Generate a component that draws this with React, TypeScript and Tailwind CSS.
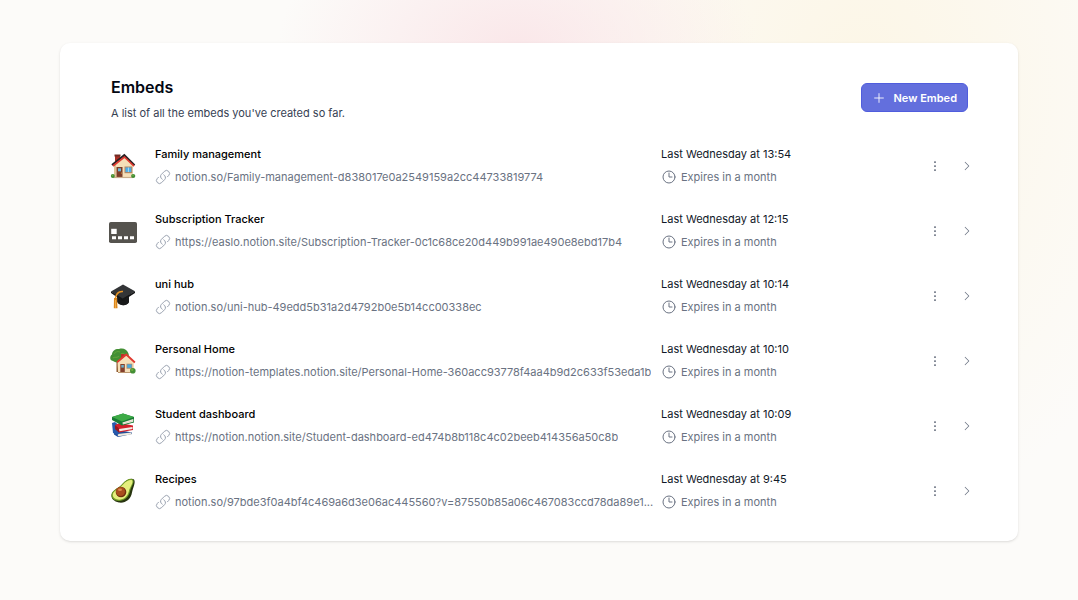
import { ReactNode } from 'react';
import {
  HiChevronRight,
  HiOutlineClock,
  HiOutlineEllipsisVertical,
  HiOutlineLink,
  HiOutlinePlus,
} from 'react-icons/hi2';

interface Embed {
  title: string;
  url: string;
  updated: string;
  expires: string;
  icon: ReactNode;
}

const HouseIcon = () => (
  <svg viewBox="0 0 28 28" className="size-7" aria-hidden="true">
    <path d="M6 3h5v9H6z" fill="#a92f24" />
    <path d="M5.5 2.5h6v2h-6z" fill="#6f2d24" />
    <path d="M5 12 15.5 4 24 13v12H5z" fill="#f5dfb8" />
    <path d="M5 12v13h2V11z" fill="#dec397" />
    <path d="M3 13 15.3 3.2 25.5 13.2" fill="none" stroke="#272023" strokeWidth="2" />
    <path d="M4 14 15.4 5 25 14.2" fill="none" stroke="#e03930" strokeWidth="1.6" />
    <path d="M7.5 15h6v10h-6z" fill="#7d3c28" />
    <path d="M9 16.3h3v3H9z" fill="#6ab8d8" />
    <circle cx="12.4" cy="21" r=".5" fill="#f0bb48" />
    <path d="M15.5 14.5h7.8v6.7h-7.8z" fill="#b08867" />
    <path d="M16.5 15.5h5.8V20h-5.8z" fill="#4caee8" />
    <path d="M19.4 15.5V20" stroke="#d3edf8" strokeWidth=".7" />
    <path d="M4 25.5h20" stroke="#c9ad8b" strokeWidth="1.2" />
    <circle cx="3.8" cy="24" r="2" fill="#438d36" />
    <circle cx="24.2" cy="24" r="2.1" fill="#438d36" />
    <circle cx="3.5" cy="23.4" r=".8" fill="#70ae45" />
    <circle cx="24" cy="23.3" r=".8" fill="#70ae45" />
  </svg>
);

const CardIcon = () => (
  <svg viewBox="0 0 28 28" className="size-7" aria-hidden="true">
    <rect x="0" y="5" width="28" height="21" rx="1.8" fill="#55534e" />
    <path d="M2.2 11.8h5.5V17H2.2z" fill="#fff" />
    <path d="M3 19.2h4v3H3zm6 0h4v3H9zm6 0h4v3h-4zm6 0h4v3h-4z" fill="#fff" />
  </svg>
);

const CapIcon = () => (
  <svg viewBox="0 0 28 28" className="size-7" aria-hidden="true">
    <path d="M8 12v8c2 4 10 4.5 12 0v-8z" fill="#292a2b" />
    <path d="M9 16c4 3 8 2 11-1v5c-2 4-8 4-11 1z" fill="#18191a" />
    <path d="m2 9.5 12-7 12 6.8-12.3 8.2z" fill="#333537" />
    <path d="m2 9.5 11.7 7L26 9.3v1.6l-12.3 8L2 11z" fill="#151617" />
    <path d="M14 9.5C9 9 7 11.5 6.3 17" fill="none" stroke="#e89525" strokeWidth="1.6" />
    <path d="M5 16h3l.5 10.2H4.8z" fill="#dc861c" />
    <path d="M6.5 18v8" stroke="#f6bd5d" strokeWidth=".7" />
  </svg>
);

const GardenHouseIcon = () => (
  <svg viewBox="0 0 28 28" className="size-7" aria-hidden="true">
    <path d="M7.5 13h3v12h-3z" fill="#8a552a" />
    <path
      d="M4 14C0 13.500 1 8.500 3 7.500 3 3.500 7 1.500 10 2c4-1.500 8 .5 9 3.500 2 3 0 7-3 7.500-3 3-8 3.500-12 1z"
      fill="#438f35"
    />
    <path d="M5 7c2-3 4-3 6-2m-7 6c2-2 4 1 6-2m2-2c3-2 4 1 4 2" fill="none" stroke="#5fa23a" strokeWidth="1.1" />
    <path d="M12 7h3.5v5H12z" fill="#b83129" />
    <path d="m8.5 15 9-7 7.5 7v10H9z" fill="#f5dfb9" />
    <path d="m8 15.3 9.3-7.8 8.6 8" fill="none" stroke="#e03930" strokeWidth="1.8" />
    <path d="M11.3 17h4.5v8.2h-4.5z" fill="#83402c" />
    <path d="M12.3 18h2.5v2.6h-2.5z" fill="#69b4d2" />
    <path d="M17.5 16.7h5.8v5h-5.8z" fill="#b08867" />
    <path d="M18.2 17.4h4.4v3.4h-4.4z" fill="#48aae0" />
    <path d="M9 25.5h14" stroke="#bb966f" strokeWidth="1" />
    <circle cx="23.8" cy="23.8" r="2.8" fill="#438f35" />
    <circle cx="23.2" cy="22.8" r="1.2" fill="#6ead3c" />
  </svg>
);

const BooksIcon = () => (
  <svg viewBox="0 0 28 28" className="size-7" aria-hidden="true">
    <path d="m5 20 4-2 14 2.500v1.500L9 25l-4-2.500z" fill="#224e99" />
    <path d="m8.500 22 14-1.500v2L9 24.300z" fill="#eee9dd" />
    <path d="m3 11 3-1 6 5-3 8-5-2z" fill="#275bad" />
    <path d="m6 13 5-2 13 2.500v4.500L10 20.500l-4-4z" fill="#d3202a" />
    <path d="m10 17 13.500-2v2L10.500 19.200z" fill="#f5eee4" />
    <path d="m6 13 4 3.500v4L6 17z" fill="#951921" />
    <path d="m3 5 11-3.500L25 5v5.500l-12 3L3 8z" fill="#187b35" />
    <path d="m3 5 11-3.500L25 5 13 9.500z" fill="#3dab46" />
    <path d="m13.500 10.500 10.800-3.400v2.600l-10.500 2.800z" fill="#f4efdf" />
    <path d="m14 11.500 9.700-2.700" stroke="#c9c4b8" strokeWidth=".5" />
  </svg>
);

const AvocadoIcon = () => (
  <svg viewBox="0 0 28 28" className="size-7" aria-hidden="true">
    <path d="M25 2.5c2 3-1 8-2 13-1 7-7 11-13 10-5-1-8-4-7.5-7.5.8-5 6.5-6 11-11C16.500 3.500 22 .5 25 2.500z" fill="#27340f" />
    <path d="M24 2.500c2 3-2 7-3 12-1.500 6-6 9.500-11 9.500-4.500 0-8-2.800-7.500-6.500.8-5 7-6 11-10.800C16.500 3 21.500.5 24 2.500z" fill="#719d27" />
    <path d="M23.300 3.500c1.200 2.500-2.500 6.500-3.500 11-1.300 5-5 8.200-9.500 8.200-4 0-6.800-2.200-6.500-5.200.7-4 6.700-5.500 10.500-10.200 2.500-3 7.200-5.300 9-3.800z" fill="#e5ef7d" />
    <circle cx="12" cy="15" r="5.300" fill="#71300f" />
    <circle cx="11.500" cy="14.500" r="4.500" fill="#a94e1d" />
    <ellipse cx="11" cy="12.700" rx="2" ry="1.300" fill="#dc8b4f" />
  </svg>
);

const embeds: Embed[] = [
  {
    title: 'Family management',
    url: 'notion.so/Family-management-d838017e0a2549159a2cc44733819774',
    updated: 'Last Wednesday at 13:54',
    expires: 'Expires in a month',
    icon: <HouseIcon />,
  },
  {
    title: 'Subscription Tracker',
    url: 'https://easlo.notion.site/Subscription-Tracker-0c1c68ce20d449b991ae490e8ebd17b4',
    updated: 'Last Wednesday at 12:15',
    expires: 'Expires in a month',
    icon: <CardIcon />,
  },
  {
    title: 'uni hub',
    url: 'notion.so/uni-hub-49edd5b31a2d4792b0e5b14cc00338ec',
    updated: 'Last Wednesday at 10:14',
    expires: 'Expires in a month',
    icon: <CapIcon />,
  },
  {
    title: 'Personal Home',
    url: 'https://notion-templates.notion.site/Personal-Home-360acc93778f4aa4b9d2c633f53eda1b',
    updated: 'Last Wednesday at 10:10',
    expires: 'Expires in a month',
    icon: <GardenHouseIcon />,
  },
  {
    title: 'Student dashboard',
    url: 'https://notion.notion.site/Student-dashboard-ed474b8b118c4c02beeb414356a50c8b',
    updated: 'Last Wednesday at 10:09',
    expires: 'Expires in a month',
    icon: <BooksIcon />,
  },
  {
    title: 'Recipes',
    url: 'notion.so/97bde3f0a4bf4c469a6d3e06ac445560?v=87550b85a06c467083ccd78da89e1...',
    updated: 'Last Wednesday at 9:45',
    expires: 'Expires in a month',
    icon: <AvocadoIcon />,
  },
];

const EmbedRow = ({ embed }: { embed: Embed }) => (
  <li className="flex h-[65px] items-center">
    <div className="mr-[18px] shrink-0">{embed.icon}</div>
    <div className="grid min-w-0 flex-1 grid-cols-[minmax(0,1fr)_266px] gap-x-1">
      <div className="min-w-0">
        <p className="font-medium text-black">{embed.title}</p>
        <a href="#" className="mt-[7px] flex items-center gap-1 text-gray-500">
          <HiOutlineLink className="size-4 shrink-0 text-gray-400" />
          <span className="truncate">{embed.url}</span>
        </a>
      </div>
      <div>
        <p className="text-gray-900">{embed.updated}</p>
        <p className="mt-[7px] flex items-center gap-1 text-gray-500">
          <HiOutlineClock className="size-4 shrink-0" />
          {embed.expires}
        </p>
      </div>
    </div>
    <button type="button" className="shrink-0 text-gray-500" aria-label="Options">
      <HiOutlineEllipsisVertical className="size-4" />
    </button>
    <a href="#" className="ml-4 shrink-0 p-0.5 text-gray-500" aria-label="Open">
      <HiChevronRight className="size-3" />
    </a>
  </li>
);

export default function App() {
  return (
    <div className="min-h-screen bg-[#fcfbf9] bg-[radial-gradient(ellipse_240px_150px_at_48%_8%,#fae7e9,transparent),radial-gradient(ellipse_330px_440px_at_80%_14%,#fcf6e6,transparent)] px-[60px] py-[43px] font-['Inter',sans-serif] text-[11px] leading-4">
      <main className="rounded-[10px] bg-white pt-[35px] pr-[43px] pb-[18px] pl-[49px] shadow-sm">
        <header className="mb-3 flex items-start justify-between pr-[7px] pl-0.5">
          <div>
            <h1 className="text-base leading-[18px] font-semibold text-gray-950">Embeds</h1>
            <p className="mt-[9px] text-gray-700">A list of all the embeds you've created so far.</p>
          </div>
          <button
            type="button"
            className="mt-[5px] flex h-[29px] items-center gap-2 rounded-md border border-[#505ddd] bg-[#636fdd] px-2.5 font-semibold text-white"
          >
            <HiOutlinePlus className="size-3.5" />
            New Embed
          </button>
        </header>
        <ul>
          {embeds.map((embed) => (
            <EmbedRow key={embed.title} embed={embed} />
          ))}
        </ul>
      </main>
    </div>
  );
}
